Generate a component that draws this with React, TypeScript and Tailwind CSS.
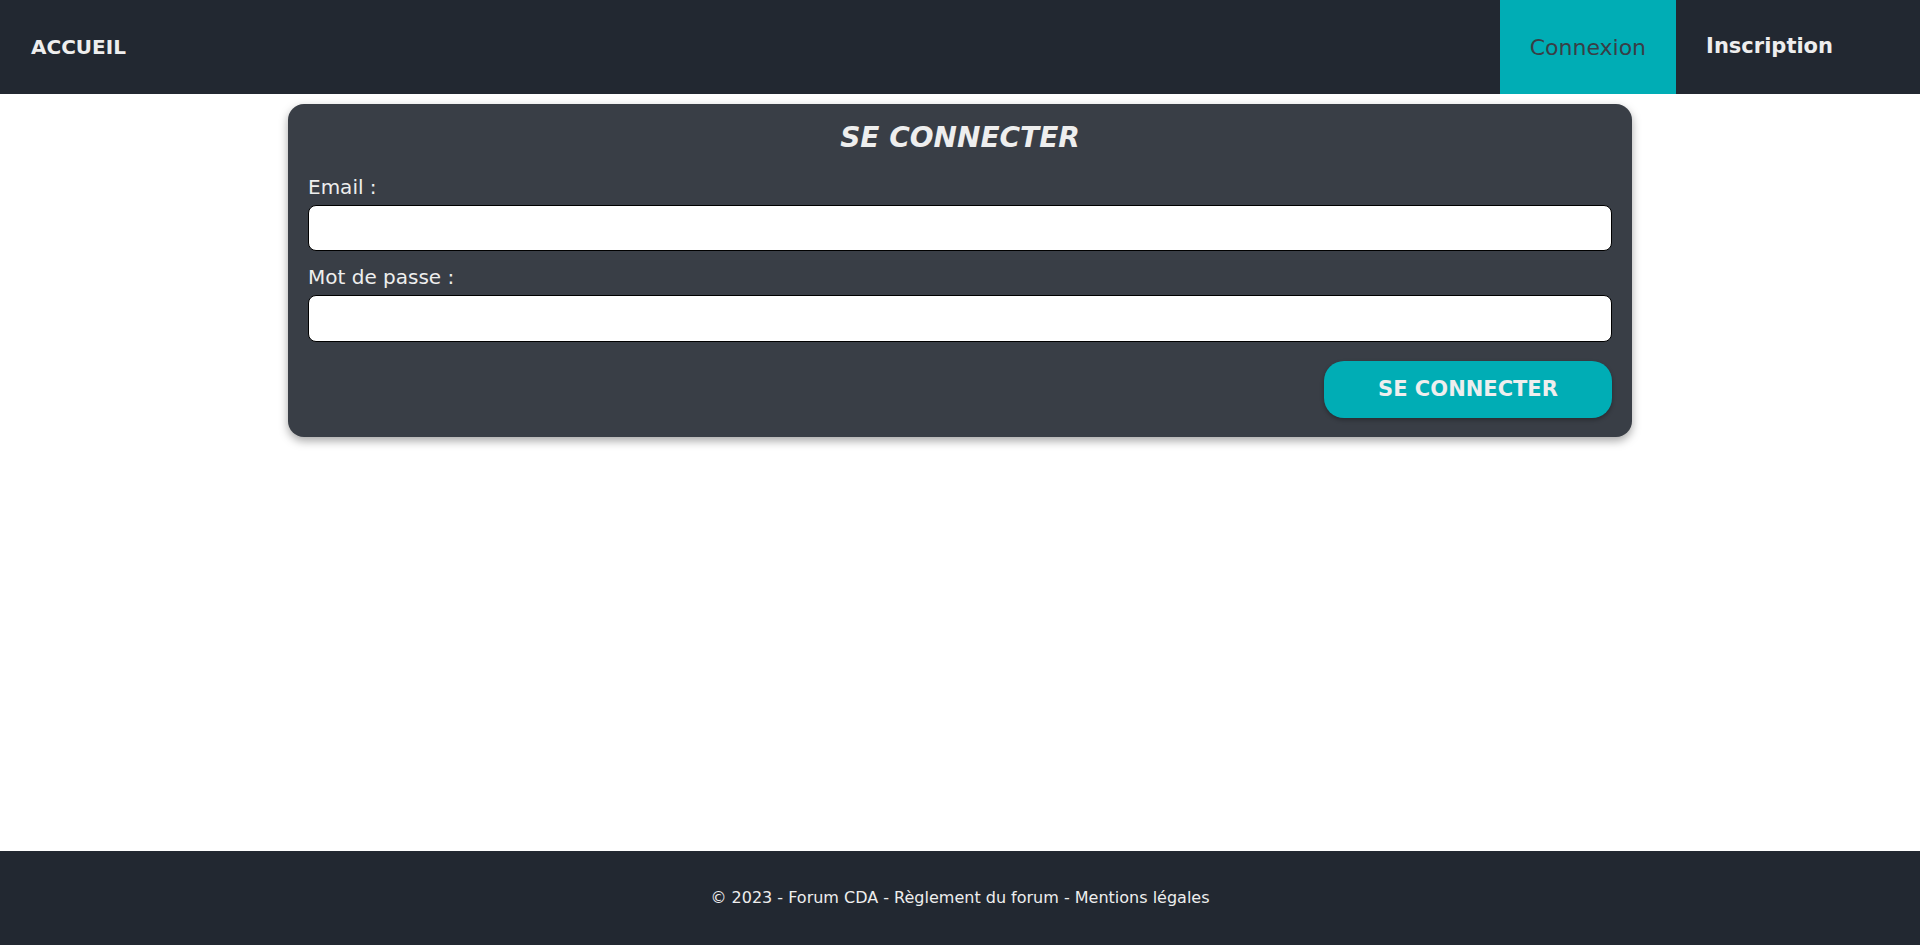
export default function App() {
  return (
    <div className="flex min-h-screen flex-col bg-white font-['DejaVu_Sans',sans-serif] text-[#eeeeee]">
      <header className="flex h-[94px] items-center justify-between bg-[#222831]">
        <a className="pl-[31px] text-[20px] font-bold">ACCUEIL</a>
        <nav className="flex h-full pr-[57px]">
          <a className="flex h-full items-center bg-[#00adb5] px-[30px] text-[22px] text-[#393e46]">Connexion</a>
          <a className="flex h-full items-center px-[30px] text-[21px] font-semibold">Inscription</a>
        </nav>
      </header>

      <main className="flex flex-1 justify-center pt-[10px]">
        <form className="flex h-fit w-[70%] flex-col rounded-[16px] bg-[#393e46] px-[20px] pb-[19px] pt-[10px] shadow-[0_4px_10px_rgba(0,0,0,0.35)]">
          <h1 className="text-center text-[28px] font-bold italic leading-[48px]">SE CONNECTER</h1>
          <label className="mt-[11px] text-[20px] leading-[28px]">Email :</label>
          <input type="email" className="mt-[4px] h-[46px] rounded-[8px] border border-black bg-white px-3 text-black" />
          <label className="mt-[12px] text-[20px] leading-[28px]">Mot de passe :</label>
          <input type="password" className="mt-[4px] h-[47px] rounded-[8px] border border-black bg-white px-3 text-black" />
          <div className="mt-[19px] flex justify-end">
            <button type="button" className="h-[57px] w-[288px] rounded-[20px] bg-[#00adb5] text-[21px] font-bold shadow-[0_2px_4px_rgba(0,0,0,0.3)]">
              SE CONNECTER
            </button>
          </div>
        </form>
      </main>

      <footer className="flex h-[94px] items-center justify-center bg-[#222831] text-[16px]">
        © 2023 - Forum CDA - Règlement du forum - Mentions légales
      </footer>
    </div>
  );
}
